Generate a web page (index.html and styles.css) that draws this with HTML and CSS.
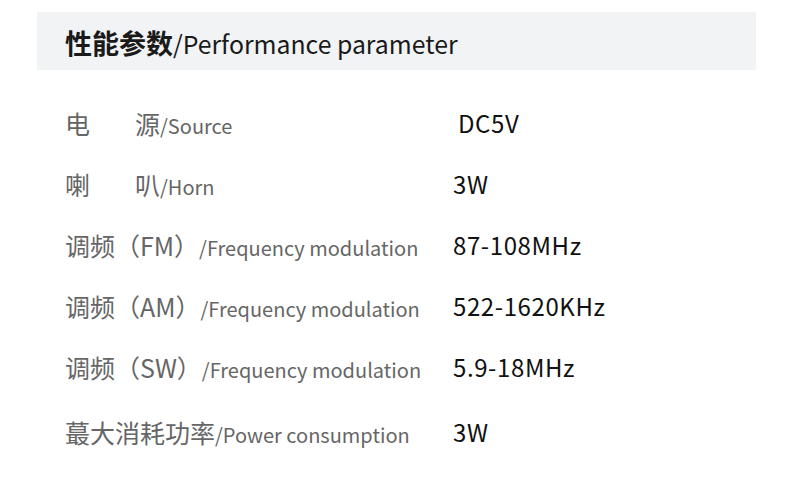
FILE: index.html
```html
<!DOCTYPE html>
<html lang="zh">
<head>
<meta charset="utf-8">
<link rel="stylesheet" href="styles.css">
</head>
<body>
<div class="page">
  <div class="header"><span class="h-cn">性能参数</span><span class="h-en">/Performance parameter</span></div>
  <div class="list">
    <div class="row"><div class="label"><span class="cn">电<span class="gap"></span>源</span><span class="en">/Source</span></div><div class="value first">DC5V</div></div>
    <div class="row"><div class="label"><span class="cn">喇<span class="gap"></span>叭</span><span class="en">/Horn</span></div><div class="value">3W</div></div>
    <div class="row"><div class="label"><span class="cn">调频（FM）</span><span class="en">/Frequency modulation</span></div><div class="value">87-108MHz</div></div>
    <div class="row"><div class="label"><span class="cn">调频（AM）</span><span class="en">/Frequency modulation</span></div><div class="value">522-1620KHz</div></div>
    <div class="row"><div class="label"><span class="cn">调频（SW）</span><span class="en">/Frequency modulation</span></div><div class="value">5.9-18MHz</div></div>
    <div class="row last"><div class="label"><span class="cn">蕞大消耗功率</span><span class="en">/Power consumption</span></div><div class="value">3W</div></div>
  </div>
</div>
</body>
</html>
```
FILE: styles.css
```css
html, body {
  margin: 0;
  padding: 0;
  background: #ffffff;
}
body {
  font-family: "Noto Sans CJK SC", "Noto Sans", sans-serif;
  width: 790px;
  height: 492px;
  overflow: hidden;
}
.header {
  margin: 12px 0 0 37px;
  width: 719px;
  height: 58px;
  box-sizing: border-box;
  padding-left: 28px;
  padding-top: 3px;
  background: #f2f3f5;
  display: flex;
  align-items: center;
  color: #1a1a1a;
}
.h-cn {
  font-size: 27px;
  font-weight: 700;
}
.h-en {
  font-size: 24.8px;
  font-weight: 400;
}
.list {
  margin-top: 22px;
  padding-left: 65px;
}
.row {
  display: grid;
  grid-template-columns: 388px auto;
  height: 61px;
  align-items: center;
}
.row.last {
  margin-top: 4px;
}
.label {
  color: #666666;
  white-space: nowrap;
}
.label .cn {
  font-size: 25px;
}
.label .gap {
  display: inline-block;
  width: 45px;
}
.label .en {
  font-size: 20px;
}
.value {
  color: #111111;
  font-size: 24px;
  letter-spacing: 0.6px;
  white-space: nowrap;
}
.value.first {
  padding-left: 5px;
}
```
